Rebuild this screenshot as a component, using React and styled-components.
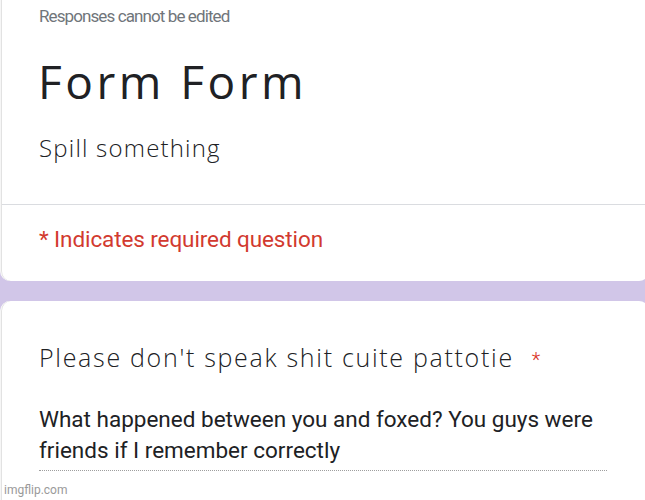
import React from "react";
import styled, { createGlobalStyle } from "styled-components";

const GlobalStyle = createGlobalStyle`
  html, body { margin: 0; padding: 0; }
  body { background: #d1c6e8; font-family: Roboto, "Liberation Sans", sans-serif; }
`;

const Page = styled.div`
  position: relative;
  width: 645px;
  height: 500px;
  overflow: hidden;
  background: #d1c6e8;
  display: flex;
  flex-direction: column;
  gap: 20px;
`;

const Card = styled.section`
  background: #ffffff;
  margin: 0 -4px 0 0;
  border-left: 1px solid #f6f6f6;
  box-shadow: inset 1px 0 0 #e2e2e2;
  border-radius: ${(p) => (p.$top ? "0 0 10px 10px" : "10px 10px 0 0")};
  ${(p) => (p.$grow ? "flex: 1;" : "")}
`;

const Section = styled.div`
  padding: ${(p) => p.$pad};
`;

const Notice = styled.div`
  font-family: Roboto, sans-serif;
  font-size: 17px;
  line-height: 24px;
  letter-spacing: -0.9px;
  color: #70757a;
`;

const Title = styled.h1`
  margin: 0;
  font-family: "Open Sans", sans-serif;
  font-weight: 500;
  font-size: 46px;
  line-height: 56px;
  letter-spacing: 3.5px;
  color: #202124;
`;

const Description = styled.div`
  font-family: "Open Sans", sans-serif;
  font-weight: 300;
  font-size: 24px;
  line-height: 30px;
  letter-spacing: 1.2px;
  color: #202124;
`;

const Divider = styled.hr`
  margin: 0 0 0 1px;
  border: 0;
  border-top: 1px solid #dadce0;
`;

const Required = styled.div`
  font-family: Roboto, sans-serif;
  font-size: 22.5px;
  line-height: 28px;
  letter-spacing: -0.1px;
  color: #d23a2f;
`;

const QuestionTitle = styled.div`
  display: flex;
  align-items: baseline;
  gap: 18px;
  font-family: "Open Sans", sans-serif;
  font-weight: 300;
  font-size: 25px;
  line-height: 32px;
  letter-spacing: 1.7px;
  color: #202124;
`;

const Asterisk = styled.span`
  color: #d93025;
  font-family: Roboto, sans-serif;
  font-size: 20px;
  letter-spacing: 0;
`;

const Answer = styled.div`
  width: 568px;
  font-family: Roboto, sans-serif;
  font-size: 22.5px;
  line-height: 31px;
  color: #202124;
  border-bottom: 1px dotted #9e9e9e;
  padding-bottom: 4px;
`;

const Watermark = styled.div`
  position: absolute;
  left: 4px;
  bottom: 3px;
  font-family: Roboto, sans-serif;
  font-size: 12px;
  color: #9a9a9a;
`;

export default function App() {
  return (
    <>
      <GlobalStyle />
      <Page>
        <Card $top>
          <Section $pad="4px 20px 0 38px">
            <Notice>Responses cannot be edited</Notice>
          </Section>
          <Section $pad="25px 20px 0 37px">
            <Title>Form Form</Title>
          </Section>
          <Section $pad="24px 20px 41px 38px">
            <Description>Spill something</Description>
          </Section>
          <Divider />
          <Section $pad="20px 20px 28px 38px">
            <Required>* Indicates required question</Required>
          </Section>
        </Card>
        <Card $grow>
          <Section $pad="40px 20px 0 38px">
            <QuestionTitle>
              Please don't speak shit cuite pattotie
              <Asterisk>*</Asterisk>
            </QuestionTitle>
          </Section>
          <Section $pad="28px 20px 0 38px">
            <Answer>
              What happened between you and foxed? You guys were friends if I
              remember correctly
            </Answer>
          </Section>
        </Card>
        <Watermark>imgflip.com</Watermark>
      </Page>
    </>
  );
}
